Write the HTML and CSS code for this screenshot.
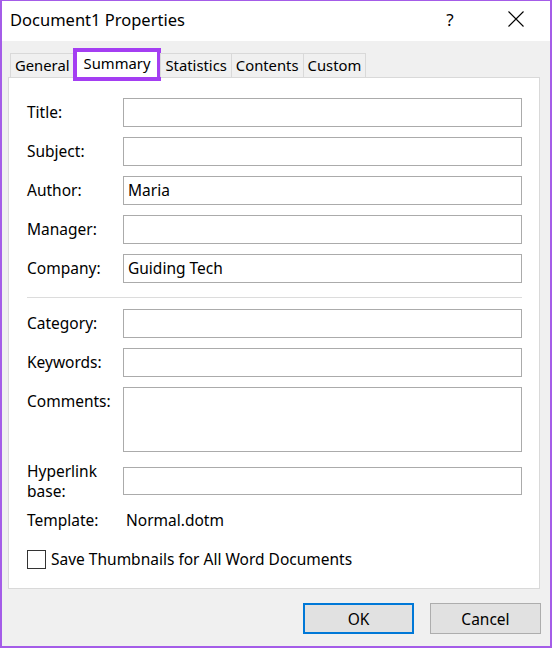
FILE: index.html
```html
<!DOCTYPE html>
<html>
<head>
<meta charset="utf-8">
<link rel="stylesheet" href="styles.css">
</head>
<body>
<div class="window">
  <div class="titlebar">
    <span class="title">Document1 Properties</span>
    <span class="help">?</span>
    <span class="close">
      <svg width="16" height="16" viewBox="0 0 16 16"><path d="M0.5 0.5 L15.5 15.5 M15.5 0.5 L0.5 15.5" stroke="#000" stroke-width="1.1" fill="none"/></svg>
    </span>
  </div>
  <div class="client">
    <div class="tabs">
      <div class="tab">General</div>
      <div class="tab selected">Summary</div>
      <div class="tab">Statistics</div>
      <div class="tab">Contents</div>
      <div class="tab">Custom</div>
    </div>
    <div class="panel">
      <div class="form">
        <label class="lbl">Title:</label><div class="field"></div>
        <label class="lbl">Subject:</label><div class="field"></div>
        <label class="lbl">Author:</label><div class="field">Maria</div>
        <label class="lbl">Manager:</label><div class="field"></div>
        <label class="lbl">Company:</label><div class="field">Guiding Tech</div>
        <div class="sep"></div>
        <label class="lbl">Category:</label><div class="field"></div>
        <label class="lbl">Keywords:</label><div class="field"></div>
        <label class="lbl top">Comments:</label><div class="field tall"></div>
        <label class="lbl two">Hyperlink<br>base:</label><div class="field short"></div>
        <label class="lbl tpl">Template:</label><div class="value tpl">Normal.dotm</div>
      </div>
      <div class="check">
        <span class="box"></span>
        <span class="check-text">Save Thumbnails for All Word Documents</span>
      </div>
    </div>
    <div class="buttons">
      <div class="btn default">OK</div>
      <div class="btn">Cancel</div>
    </div>
  </div>
</div>
</body>
</html>
```
FILE: styles.css
```css
html, body {
  margin: 0;
  padding: 0;
}
body {
  font-family: "Noto Sans", "Open Sans", sans-serif;
  font-size: 15.5px;
  color: #000;
  background: #fff;
}
.window {
  width: 552px;
  height: 648px;
  box-sizing: border-box;
  border: 2px solid #a45ce8;
  border-top-width: 1px;
  display: flex;
  flex-direction: column;
  background: #f0f0f0;
}
.titlebar {
  height: 40px;
  background: #fff;
  display: flex;
  align-items: center;
  flex-shrink: 0;
}
.title {
  margin-left: 8px;
  font-size: 16.5px;
  flex: 1;
  position: relative;
  top: -2px;
}
.help {
  font-size: 17px;
  width: 16px;
  text-align: center;
  margin-right: 50px;
  position: relative;
  top: -2px;
}
.close {
  width: 16px;
  height: 16px;
  margin-right: 26px;
  display: flex;
  position: relative;
  top: -2px;
}
.client {
  flex: 1;
  display: flex;
  flex-direction: column;
  padding: 12px 0 0 6px;
}
.tabs {
  display: flex;
  height: 24px;
  margin-left: 2px;
  position: relative;
  z-index: 1;
  font-size: 14.8px;
}
.tab {
  border: 1px solid #d9d9d9;
  border-bottom: none;
  border-right: none;
  padding: 0 4px 0 4px;
  height: 24px;
  line-height: 23px;
  box-sizing: border-box;
  background: #f0f0f0;
}
.tab:last-child {
  border-right: 1px solid #d9d9d9;
}
.tab.selected {
  background: #fff;
  height: 27px;
  margin-top: -2px;
  line-height: 25px;
  padding: 0 8px;
  margin-left: 2px;
  margin-right: 2px;
  outline: 4px solid #a43ef2;
  outline-offset: -1px;
  border: none;
}
.panel {
  width: 532px;
  height: 512px;
  box-sizing: border-box;
  border: 1px solid #d9d9d9;
  background: #fff;
  padding: 20px 17px 0 18px;
}
.form {
  display: grid;
  grid-template-columns: 96px 1fr;
  row-gap: 10px;
  align-items: center;
}
.lbl {
  line-height: 19px;
}
.lbl.top {
  align-self: start;
  padding-top: 5px;
}
.lbl.two {
  line-height: 20px;
  margin: -1px 0;
}
.field {
  height: 29px;
  box-sizing: border-box;
  border: 1px solid #ababab;
  padding: 0 4px;
  line-height: 26px;
}
.field.tall {
  height: 65px;
}
.field.short {
  height: 28px;
}
.sep {
  grid-column: 1 / 3;
  height: 1px;
  background: #dcdcdc;
  margin: 4px 0 1px;
}
.tpl {
  line-height: 20px;
}
.value.tpl {
  padding-left: 3px;
}
.check {
  display: flex;
  align-items: center;
  margin-top: 18px;
}
.box {
  width: 19px;
  height: 19px;
  box-sizing: border-box;
  border: 1px solid #333;
  background: #fff;
  margin-right: 5px;
}
.buttons {
  display: flex;
  justify-content: flex-end;
  gap: 16px;
  margin-top: 14px;
  padding-right: 9px;
}
.btn {
  width: 111px;
  height: 31px;
  box-sizing: border-box;
  border: 1px solid #adadad;
  background: #e1e1e1;
  display: flex;
  align-items: center;
  justify-content: center;
}
.btn.default {
  border: 2px solid #0078d7;
}
```
